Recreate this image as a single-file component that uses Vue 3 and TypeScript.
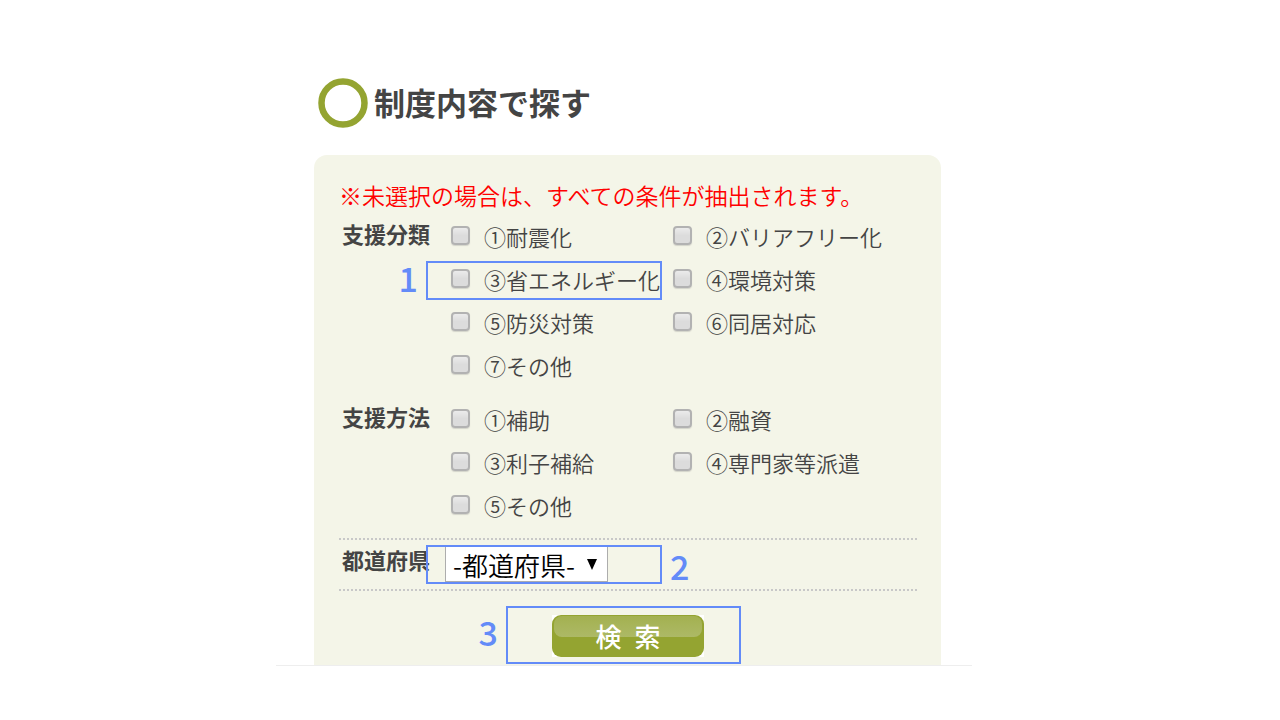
<script setup lang="ts">
import { ref } from 'vue'

interface Choice {
  id: string
  label: string
  marker?: string
}

interface Group {
  title: string
  choices: Choice[]
}

const groups: Group[] = [
  {
    title: '支援分類',
    choices: [
      { id: 'type-1', label: '①耐震化' },
      { id: 'type-2', label: '②バリアフリー化' },
      { id: 'type-3', label: '③省エネルギー化', marker: '1' },
      { id: 'type-4', label: '④環境対策' },
      { id: 'type-5', label: '⑤防災対策' },
      { id: 'type-6', label: '⑥同居対応' },
      { id: 'type-7', label: '⑦その他' },
    ],
  },
  {
    title: '支援方法',
    choices: [
      { id: 'method-1', label: '①補助' },
      { id: 'method-2', label: '②融資' },
      { id: 'method-3', label: '③利子補給' },
      { id: 'method-4', label: '④専門家等派遣' },
      { id: 'method-5', label: '⑤その他' },
    ],
  },
]

const selected = ref<string[]>([])
const prefecture = ref('')
</script>

<template>
  <main class="page">
    <section class="frame">
      <h1 class="title">
        <svg class="ring" viewBox="0 0 50 50" aria-hidden="true">
          <circle cx="25" cy="25" r="21.5" fill="none" stroke="#94a431" stroke-width="6.5" />
        </svg>
        <span>制度内容で探す</span>
      </h1>

      <form class="panel" @submit.prevent>
        <p class="notice">※未選択の場合は、すべての条件が抽出されます。</p>

        <fieldset v-for="group in groups" :key="group.title" class="group" :aria-label="group.title">
          <div class="name">{{ group.title }}</div>
          <div class="choices">
            <div v-for="choice in group.choices" :key="choice.id" class="choice">
              <input :id="choice.id" v-model="selected" type="checkbox" :value="choice.id" />
              <label :for="choice.id">{{ choice.label }}</label>
              <div v-if="choice.marker" class="marker marker-field">
                <span class="number">{{ choice.marker }}</span>
              </div>
            </div>
          </div>
        </fieldset>

        <div class="area">
          <label class="name" for="prefecture">都道府県</label>
          <div class="picker">
            <select id="prefecture" v-model="prefecture">
              <option value="">-都道府県-</option>
            </select>
            <svg class="arrow" viewBox="0 0 10 11" aria-hidden="true">
              <path d="M0 0H10L5 11Z" fill="#000" />
            </svg>
            <div class="marker marker-field marker-select">
              <span class="number number-after">2</span>
            </div>
          </div>
        </div>

        <div class="actions">
          <div class="submit">
            <button type="submit"><span class="face">検&ensp;索</span></button>
            <div class="marker marker-button">
              <span class="number">3</span>
            </div>
          </div>
        </div>
      </form>
    </section>
  </main>
</template>

<style>
body {
  background: #fff;
}
</style>

<style scoped>
* {
  box-sizing: border-box;
}

.page {
  padding: 0 32px 0 0;
  font-family: "Noto Sans CJK JP", sans-serif;
  color: #444;
}

.frame {
  max-width: 696px;
  margin: 0 auto;
  padding: 78px 31px 0 38px;
  border-bottom: 1px solid #eee;
}

.title {
  display: flex;
  align-items: flex-start;
  gap: 6px;
  height: 50px;
  margin: 0 0 27px 4px;
  font-size: 31px;
  font-weight: 700;
  line-height: 48px;
}

.ring {
  width: 50px;
  height: 50px;
}

.panel {
  padding: 24px 24px 8px 25px;
  border-radius: 13px 13px 0 0;
  background: #f4f5e8;
}

.notice {
  margin: 0 0 2px;
  font-size: 23px;
  font-weight: 350;
  line-height: 33px;
  color: #f00;
  white-space: nowrap;
}

.group,
.area {
  display: grid;
  grid-template-columns: 106px 1fr;
}

.group {
  min-width: 0;
  margin: 0 0 11px;
  padding: 0;
  border: 0;
}

.name {
  padding-left: 3px;
  font-size: 22px;
  font-weight: 700;
  line-height: 38px;
  white-space: nowrap;
}

.choices {
  display: grid;
  grid-template-columns: 222px 1fr;
  grid-auto-rows: 43px;
}

.choice {
  position: relative;
  display: flex;
  align-items: center;
  gap: 14px;
  padding-left: 6px;
}

.choice input {
  appearance: none;
  flex: none;
  width: 19px;
  height: 19px;
  margin: 0;
  border: 2px solid #b2b2b2;
  border-radius: 4px;
  background: linear-gradient(#ebebeb, #dcdcdc 50%);
  box-shadow: 0 1px 1px #d3d4ca;
}

.choice input:checked {
  background: #638bf8;
}

.choice label {
  font-size: 22px;
  font-weight: 350;
  line-height: 36px;
  white-space: nowrap;
}

.area {
  margin-top: 12px;
  padding: 0 0 7px;
  border-top: 2px dotted #c8c8c8;
  border-bottom: 2px dotted #c8c8c8;
}

.picker {
  position: relative;
  justify-self: start;
  margin-top: 6px;
}

.picker select {
  appearance: none;
  display: block;
  width: 163px;
  height: 36px;
  padding: 2px 0 0 7px;
  border: 1px solid #adadad;
  border-radius: 0;
  background: #fff;
  color: #000;
  font-family: inherit;
  font-size: 26px;
  font-weight: 350;
  line-height: 30px;
}

.arrow {
  position: absolute;
  top: 13px;
  right: 11px;
  width: 10px;
  height: 11px;
  pointer-events: none;
}

.actions {
  display: flex;
  justify-content: center;
  padding-top: 24px;
}

.submit {
  position: relative;
}

.submit button {
  display: block;
  width: 152px;
  height: 42px;
  padding: 0;
  border: 0;
  background: #fff;
  color: #fff;
  font-family: inherit;
  font-size: 26px;
  font-weight: 500;
  line-height: 42px;
}

.face {
  position: relative;
  z-index: 0;
  display: block;
  border-radius: 9px;
  background: #94a431;
}

.face::before {
  content: "";
  position: absolute;
  z-index: -1;
  inset: 1px 2px 20px;
  border-radius: 8px;
  background: linear-gradient(#a3b150, #adb966);
}

.marker {
  position: absolute;
  border: 2px solid #638bf8;
  pointer-events: none;
}

.marker-field {
  top: 4px;
  left: -19px;
  width: 236px;
  height: 39px;
}

.marker-select {
  top: -1px;
}

.marker-button {
  top: -9px;
  left: -46px;
  width: 235px;
  height: 58px;
}

.number {
  position: absolute;
  top: 50%;
  right: 100%;
  margin: -21px 10px 0;
  color: #638bf8;
  font-size: 34px;
  font-weight: 500;
  line-height: 36px;
}

.number-after {
  right: auto;
  left: 100%;
  margin-top: -17px;
}
</style>
